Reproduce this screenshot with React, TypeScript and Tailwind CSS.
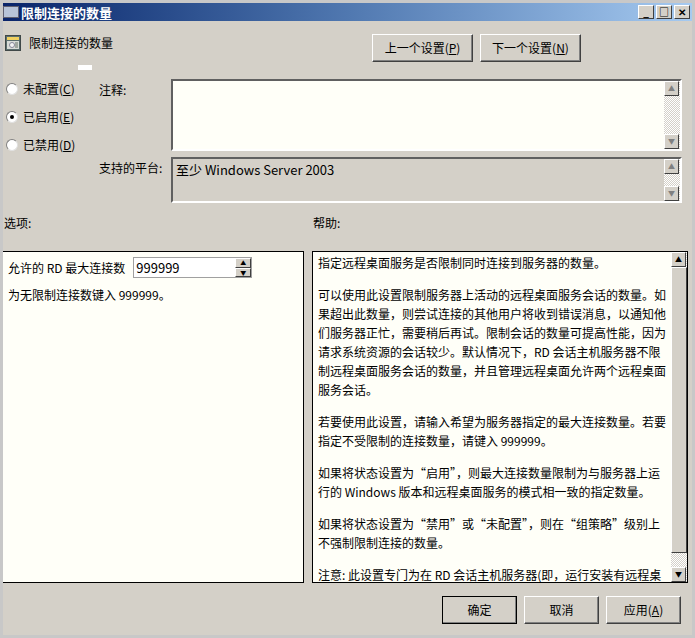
const font = { fontFamily: '"Noto Sans CJK SC", "Liberation Sans", sans-serif' };

function Btn({ children, w = "w-[101px]", def = false }: { children: React.ReactNode; w?: string; def?: boolean }) {
  return (
    <button
      className={`${w} h-[28px] text-[12px] text-black bg-[#d4d0c8] border ${def ? "border-black" : "border-t-white border-l-white border-r-[#404040] border-b-[#404040]"} shadow-[inset_-1px_-1px_0_#808080]`}
    >
      {children}
    </button>
  );
}

function Radio({ checked, label, u }: { checked?: boolean; label: string; u: string }) {
  return (
    <div className="flex items-center gap-[5px] h-[28px]">
      <span className="w-[12px] h-[12px] rounded-full bg-white border border-t-[#808080] border-l-[#808080] border-r-[#e0e0e0] border-b-[#e0e0e0] flex items-center justify-center">
        {checked && <span className="w-[4px] h-[4px] rounded-full bg-black" />}
      </span>
      <span>
        {label}(<span className="underline">{u}</span>)
      </span>
    </div>
  );
}

function VScroll({ h, dark = false }: { h: string; dark?: boolean }) {
  const arrowCls = "w-[15px] h-[15px] bg-[#d4d0c8] border border-t-white border-l-white border-r-[#404040] border-b-[#404040] flex items-center justify-center text-[7px]";
  return (
    <div className={`w-[16px] ${h} flex flex-col justify-between bg-[repeating-conic-gradient(#ffffff_0_25%,#d4d0c8_0_50%)] bg-[length:2px_2px]`}>
      <div className={`${arrowCls} ${dark ? "text-black" : "text-[#808080]"}`}>▲</div>
      {dark && <div className="flex-1 bg-[#d4d0c8] border border-t-white border-l-white border-r-[#404040] border-b-[#404040] mb-[14px]" />}
      <div className={`${arrowCls} ${dark ? "text-black" : "text-[#808080]"}`}>▼</div>
    </div>
  );
}

const help = [
  "指定远程桌面服务是否限制同时连接到服务器的数量。",
  "可以使用此设置限制服务器上活动的远程桌面服务会话的数量。如果超出此数量，则尝试连接的其他用户将收到错误消息，以通知他们服务器正忙，需要稍后再试。限制会话的数量可提高性能，因为请求系统资源的会话较少。默认情况下，RD 会话主机服务器不限制远程桌面服务会话的数量，并且管理远程桌面允许两个远程桌面服务会话。",
  "若要使用此设置，请输入希望为服务器指定的最大连接数量。若要指定不受限制的连接数量，请键入 999999。",
  "如果将状态设置为“启用”，则最大连接数量限制为与服务器上运行的 Windows 版本和远程桌面服务的模式相一致的指定数量。",
  "如果将状态设置为“禁用”或“未配置”，则在“组策略”级别上不强制限制连接的数量。",
  "注意: 此设置专门为在 RD 会话主机服务器(即，运行安装有远程桌面服务角色的 Windows 的服务器)上使用而设计。",
];

export default function App() {
  return (
    <div style={font} className="w-[695px] h-[638px] bg-[#d4d0c8] border-[3px] border-[#c8c8c8] text-[12px] text-black overflow-hidden flex flex-col">
      {/* title bar */}
      <div className="h-[18px] shrink-0 bg-gradient-to-r from-[#0a246a] via-[#5078b0] to-[#a6caf0] flex items-center justify-between pr-[2px]">
        <div className="flex items-center gap-[2px] text-white font-bold text-[13px] leading-none">
          <span className="w-[16px] h-[12px] bg-[#b8c4d8] border border-[#606070]" />
          限制连接的数量
        </div>
        <div className="flex gap-[2px]">
          {["_", "□", "✕"].map((c, i) => (
            <span key={i} className="w-[16px] h-[14px] bg-[#d4d0c8] border border-t-white border-l-white border-r-[#404040] border-b-[#404040] text-[10px] leading-[12px] text-center font-bold">
              {c}
            </span>
          ))}
        </div>
      </div>

      {/* header */}
      <div className="flex justify-between pl-[2px] pr-[111px] pt-[13px]">
        <div className="flex flex-col">
          <div className="flex items-center gap-[8px]">
            <svg width="16" height="16" viewBox="0 0 16 16">
              <rect x="0.5" y="0.5" width="15" height="15" fill="#5a6e6e" stroke="#404848" />
              <rect x="2" y="2" width="12" height="3" fill="#f0d060" />
              <rect x="2" y="6" width="12" height="8" fill="#d8dcd8" />
              <circle cx="7" cy="10" r="2.5" fill="#f4f4f4" stroke="#889" />
              <rect x="10" y="7" width="3" height="6" fill="#a0a8a0" />
            </svg>
            <span>限制连接的数量</span>
          </div>
          <span className="ml-[73px] mt-[13px] w-[14px] h-[5px] bg-white" />
        </div>
        <div className="flex gap-[7px]">
          <Btn>上一个设置(<span className="underline">P</span>)</Btn>
          <Btn>下一个设置(<span className="underline">N</span>)</Btn>
        </div>
      </div>

      {/* state + comments */}
      <div className="flex pl-[3px] mt-[-5px] items-start">
        <div className="w-[95px] pt-[10px]">
          <Radio label="未配置" u="C" />
          <Radio checked label="已启用" u="E" />
          <Radio label="已禁用" u="D" />
        </div>
        <div className="flex flex-col pt-[14px] ml-[-2px]">
          <div className="flex">
            <div className="w-[72px] pt-[2px]">注释:</div>
            <div className="w-[511px] h-[72px] bg-[#fffff8] border-2 border-t-[#606060] border-l-[#606060] border-r-white border-b-white flex justify-end">
              <VScroll h="h-[68px]" />
            </div>
          </div>
          <div className="flex mt-[6px]">
            <div className="w-[72px] pt-[2px]">支持的平台:</div>
            <div className="w-[511px] h-[46px] bg-[#d4d0c8] border-2 border-t-[#606060] border-l-[#606060] border-r-white border-b-white flex justify-between">
              <span className="pl-[3px] pt-[1px] text-[13px]">至少 Windows Server 2003</span>
              <VScroll h="h-[42px]" />
            </div>
          </div>
        </div>
      </div>

      {/* section labels */}
      <div className="flex mt-[11px] pl-[1px]">
        <div className="w-[309px]">选项:</div>
        <div>帮助:</div>
      </div>

      {/* panels */}
      <div className="flex gap-[8px] mt-[19px] ml-[-1px]">
        <div className="w-[302px] h-[332px] bg-[#fffff8] border border-black p-[5px]">
          <div className="flex items-center gap-[8px]">
            <span>允许的 RD 最大连接数</span>
            <div className="w-[119px] h-[21px] bg-white border border-[#a0a0a0] flex justify-between items-center">
              <span className="pl-[2px] text-[13px]">999999</span>
              <div className="flex flex-col w-[16px] h-[19px]">
                <span className="flex-1 bg-[#d4d0c8] border border-t-white border-l-white border-r-[#404040] border-b-[#404040] text-[6px] leading-[7px] text-center">▲</span>
                <span className="flex-1 bg-[#d4d0c8] border border-t-white border-l-white border-r-[#404040] border-b-[#404040] text-[6px] leading-[7px] text-center">▼</span>
              </div>
            </div>
          </div>
          <div className="mt-[8px]">为无限制连接数键入 999999。</div>
        </div>
        <div className="w-[376px] h-[332px] bg-[#fffff8] border border-black flex">
          <div className="flex-1 overflow-hidden px-[5px] pt-[1px] leading-[19px]">
            {help.map((p, i) => (
              <p key={i} className="mb-[13px]">{p}</p>
            ))}
          </div>
          <VScroll h="h-[330px]" dark />
        </div>
      </div>

      {/* footer buttons */}
      <div className="flex justify-end gap-[7px] pr-[11px] mt-[13px]">
        <Btn w="w-[75px]" def>确定</Btn>
        <Btn w="w-[75px]">取消</Btn>
        <Btn w="w-[75px]">应用(<span className="underline">A</span>)</Btn>
      </div>
    </div>
  );
}
